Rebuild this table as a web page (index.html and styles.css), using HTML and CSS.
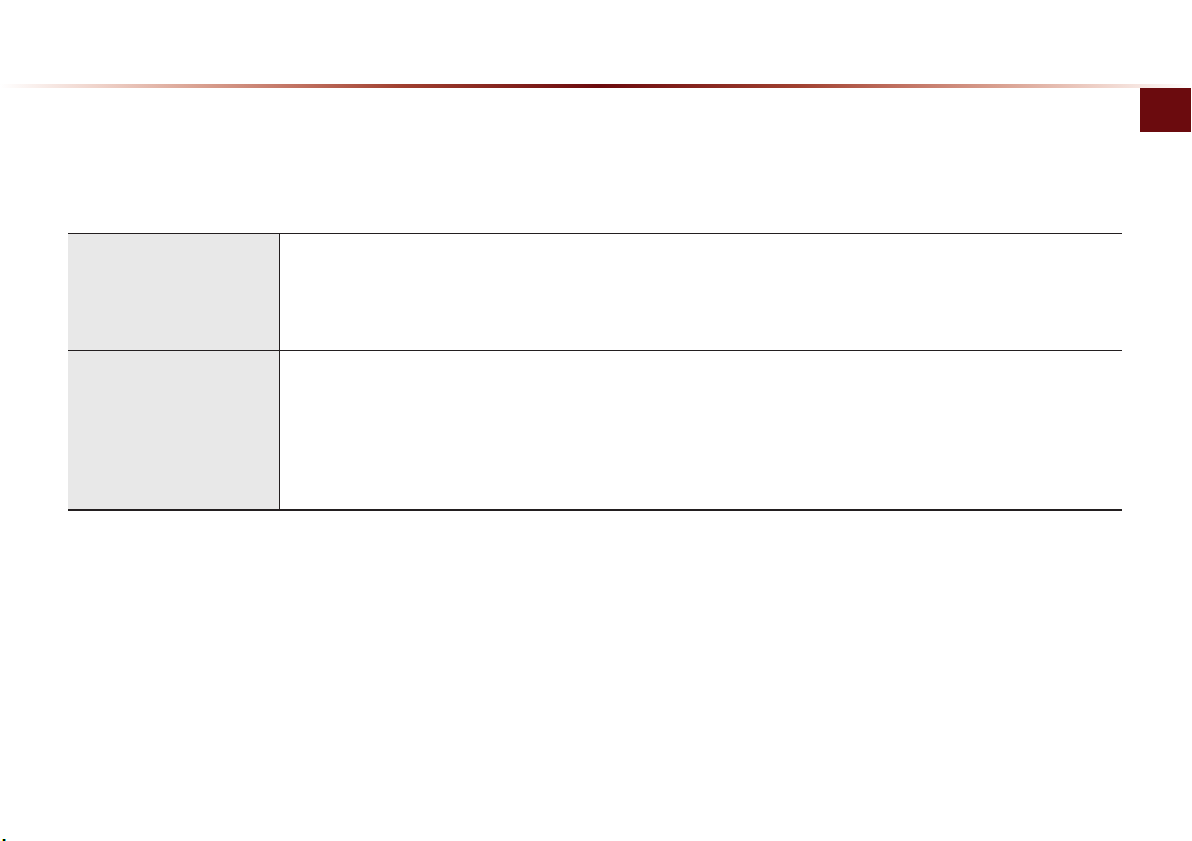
FILE: index.html
```html
<!DOCTYPE html>
<html>
<head>
<meta charset="utf-8">
<link rel="stylesheet" href="styles.css">
</head>
<body>
<div class="page">
  <header class="header">
    <div class="rule"></div>
    <div class="tab-row"><div class="tab"></div></div>
  </header>
  <section class="spec">
    <div class="row row-short">
      <div class="label"></div>
      <div class="value"></div>
    </div>
    <div class="row row-tall">
      <div class="label"></div>
      <div class="value"></div>
    </div>
  </section>
  <div class="marks"><span class="m-y"></span><span class="m-k"></span><span class="m-c"></span></div>
</div>
</body>
</html>
```

FILE: styles.css
```css
html, body {
  margin: 0;
  padding: 0;
  background: #ffffff;
  font-family: "Liberation Sans", Arial, sans-serif;
}
.page {
  position: relative;
  width: 1192px;
  height: 841px;
  overflow: hidden;
}
.header {
  padding-top: 84px;
}
.rule {
  height: 4px;
  margin-right: 1px;
  background: linear-gradient(to right,
    #ffffff 0%,
    #efd2c9 8.4%,
    #d9a090 16.8%,
    #c07060 25.2%,
    #a04030 33.6%,
    #6b0a0d 50.3%,
    #a04030 67%,
    #c07060 75.4%,
    #d9a090 83.9%,
    #efd2c9 92.3%,
    #ffffff 100%);
}
.tab-row {
  display: flex;
  justify-content: flex-end;
  padding-right: 1px;
}
.tab {
  width: 51px;
  height: 44px;
  background: #6b0b0e;
}
.spec {
  margin: 101px 0 0 68px;
  width: 1054px;
  border-bottom: 2px solid #231f20;
}
.row {
  display: grid;
  grid-template-columns: 212px 1fr;
  border-top: 1px solid #231f20;
}
.row-short { height: 116px; }
.row-tall { height: 158px; }
.label {
  background: #e8e8e8;
  border-right: 1px solid #231f20;
}
.value {
  background: #ffffff;
}
.marks {
  position: absolute;
  left: 2px;
  top: 839px;
  display: flex;
  height: 2px;
}
.marks span { width: 1px; height: 2px; display: block; }
.m-y { background: #ffe600; }
.m-k { background: #000000; width: 2px !important; }
.m-c { background: #00d8f0; }
```
